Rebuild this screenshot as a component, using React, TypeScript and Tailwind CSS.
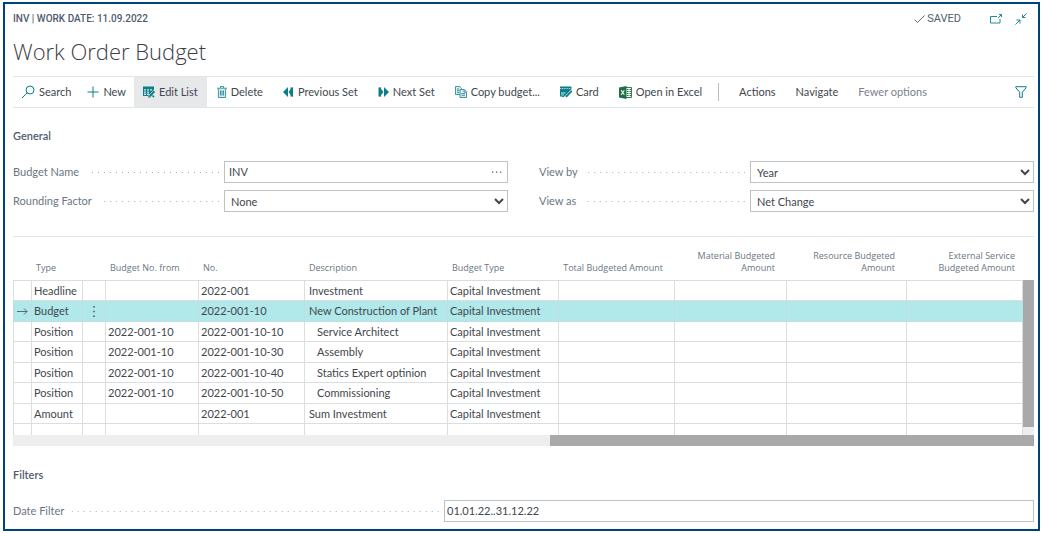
import React, { useState } from 'react';

const SearchIcon = () => (
  <svg className="size-[14px] text-[#0b7f88]" viewBox="0 0 14 14" fill="none" stroke="currentColor">
    <circle cx="9" cy="5" r="4" />
    <path d="M6.2 7.8 1 13" />
  </svg>
);

const PlusIcon = () => (
  <svg className="size-3 text-[#0b7f88]" viewBox="0 0 12 12" fill="none" stroke="currentColor">
    <path d="M6 0.5v11M0.5 6h11" />
  </svg>
);

const EditListIcon = () => (
  <svg className="size-3" viewBox="0 0 12 12">
    <path fill="#0b7f88" d="M0 0.5h11v5L6.5 10H0z" />
    <path fill="#d5e6e8" d="M1 3.2h2v1.4H1zM4 3.2h2v1.4H4zM7 3.2h2v1.4H7zM1 5.4h2v1.4H1zM4 5.4h2v1.4H4zM1 7.6h2V9H1zM4 7.6h2V9H4z" />
    <path stroke="#e6e8ea" strokeWidth="3.6" d="M12 5 6.5 11" />
    <path stroke="#0b7f88" strokeWidth="2" d="M11.4 5.2 6.8 10.2" />
    <path fill="#0b7f88" d="M5.6 9.4 7.6 11.2l-2.4.6zM9 10l1-1 1.5 1.5-1 1.2z" />
  </svg>
);

const TrashIcon = () => (
  <svg className="h-3 w-[10px] text-[#2b8d95]" viewBox="0 0 10 12" fill="none" stroke="currentColor">
    <path fill="#d9e8ea" stroke="none" d="M1.5 2.5h7v9h-7z" />
    <path d="M0 2.2h10M3.5 2v-1.5h3V2M1.4 2.5v9h7.2v-9M3.5 4.5v5M5 4.5v5M6.5 4.5v5" strokeWidth="0.9" />
  </svg>
);

const PreviousIcon = () => (
  <svg className="h-[10px] w-[11px]" viewBox="0 0 11 10" fill="#0b7f88">
    <path d="M5 0v10L0 5zM9.5 0v10L5.5 5z" />
    <path d="M7.5 0.5H10v9H7.5z" />
  </svg>
);

const NextIcon = () => (
  <svg className="h-[10px] w-[11px]" viewBox="0 0 11 10" fill="#0b7f88">
    <path d="M6 0v10l5-5zM1.5 0v10l4-5z" />
    <path d="M0.5 0.5H3v9H0.5z" />
  </svg>
);

const CopyIcon = () => (
  <svg className="size-3 text-[#2b8d95]" viewBox="0 0 12 12" fill="none" stroke="currentColor" strokeWidth="0.9">
    <path fill="#dcebed" d="M5 8.5H0.5v-8h4.2l1.8 1.8V3" />
    <path d="M2 3h2M2 4.7h2M2 6.4h2" />
    <path fill="#dcebed" d="M5 3.5h4.2l2.3 2.3v5.7H5z" />
    <path d="M9 3.7V6h2.3M6.5 7.5h3.5M6.5 9.3h3.5" />
  </svg>
);

const CardIcon = () => (
  <svg className="size-3" viewBox="0 0 12 12">
    <path fill="#0b7f88" d="M0 0.5h11.5v5L6.5 10.5H0z" />
    <path stroke="#fff" strokeWidth="0.7" d="M0 2.6h11.5" strokeDasharray="1.2 0.6" />
    <path fill="#cfe5e7" d="M1 6.6h4.6v0.9H1zM1 8.5h3v1H1z" />
    <path stroke="#fff" strokeWidth="3.4" d="M12.4 4.8 5.5 12" />
    <path stroke="#0b7f88" strokeWidth="1.8" d="M11.8 4.8 6 10.8" />
    <path stroke="#0b7f88" d="M1.5 9.5 3 11l2.5-3.5" fill="none" />
  </svg>
);

const ExcelIcon = () => (
  <svg className="size-[13px]" viewBox="0 0 13 13">
    <path fill="#fff" stroke="#1e7145" strokeWidth="0.9" d="M6 1.5h6.5v10H6z" />
    <path stroke="#1e7145" d="M8 3.5h1.5M10.5 3.5H12M8 5.5h1.5M10.5 5.5H12M8 7.5h1.5M10.5 7.5H12M8 9.5h1.5M10.5 9.5H12" strokeWidth="1.2" />
    <path fill="#1e7145" d="M0 1.4 7.5 0v13L0 11.6z" />
    <path stroke="#fff" strokeWidth="1.1" d="M2.2 4.2 5.3 8.8M5.3 4.2 2.2 8.8" />
  </svg>
);

const FilterIcon = () => (
  <svg className="size-3 text-[#0b7f88]" viewBox="0 0 12 12" fill="none" stroke="currentColor">
    <path d="M0.8 0.7h10.4v1L7.3 6.2v5.1H4.7V6.2L0.8 1.7z" />
  </svg>
);

const actions = [
  { label: 'Search', icon: SearchIcon, style: 'px-2' },
  { label: 'New', icon: PlusIcon, style: 'px-2' },
  { label: 'Edit List', icon: EditListIcon, style: 'px-[9px] bg-[#e6e8ea]' },
  { label: 'Delete', icon: TrashIcon, style: 'px-[10px]' },
  { label: 'Previous Set', icon: PreviousIcon, style: 'px-[10px]' },
  { label: 'Next Set', icon: NextIcon, style: 'px-[10px]' },
  { label: 'Copy budget...', icon: CopyIcon, style: 'px-[10px]' },
  { label: 'Card', icon: CardIcon, style: 'px-[10px]' },
  { label: 'Open in Excel', icon: ExcelIcon, style: 'px-[10px]' },
];

const rows = [
  { type: 'Headline', from: '', no: '2022-001', description: 'Investment', budgetType: 'Capital Investment' },
  { type: 'Budget', from: '', no: '2022-001-10', description: 'New Construction of Plant', budgetType: 'Capital Investment' },
  { type: 'Position', from: '2022-001-10', no: '2022-001-10-10', description: 'Service Architect', budgetType: 'Capital Investment' },
  { type: 'Position', from: '2022-001-10', no: '2022-001-10-30', description: 'Assembly', budgetType: 'Capital Investment' },
  { type: 'Position', from: '2022-001-10', no: '2022-001-10-40', description: 'Statics Expert optinion', budgetType: 'Capital Investment' },
  { type: 'Position', from: '2022-001-10', no: '2022-001-10-50', description: 'Commissioning', budgetType: 'Capital Investment' },
  { type: 'Amount', from: '', no: '2022-001', description: 'Sum Investment', budgetType: 'Capital Investment' },
];

function FieldLabel({ id, text, wide }: { id: string; text: string; wide?: boolean }) {
  return (
    <label
      htmlFor={id}
      className={`flex shrink-0 items-center gap-2 pr-[5px] text-[#6b7683] ${wide ? 'w-[431px]' : 'w-[211px]'}`}
    >
      {text}
      <span className="h-px flex-1 bg-[linear-gradient(to_right,transparent_5px,#a4a9ae_5px)] bg-[length:6px_1px] bg-right" />
    </label>
  );
}

function SelectField({ id, label, options }: { id: string; label: string; options: string[] }) {
  return (
    <div className="flex h-[22px] items-stretch">
      <FieldLabel id={id} text={label} />
      <select id={id} className="min-w-0 flex-1 border border-[#bfc2c5] bg-white pl-[2px] text-[#42474d]">
        {options.map((option) => (
          <option key={option}>{option}</option>
        ))}
      </select>
    </div>
  );
}

export default function App() {
  const [selected, setSelected] = useState(1);
  const [budgetName, setBudgetName] = useState('INV');
  const [dateFilter, setDateFilter] = useState('01.01.22..31.12.22');

  return (
    <div className="bg-white py-[2px] pl-[3px] pr-[2px] font-['Lato','Open_Sans',sans-serif] text-[11px] leading-4 text-[#42474d]">
      <main className="border-2 border-[#00437c] pb-[7px] pl-2 pr-1">
        {/* Header */}
        <header className="flex items-center justify-between pt-[7px]">
          <span className="font-['Roboto',sans-serif] text-[10px] font-medium text-[#505c6d]">INV | WORK DATE: 11.09.2022</span>
          <div className="flex items-center pr-[7px]">
            <span className="mr-[29px] flex items-center gap-[2px] font-['Roboto',sans-serif] text-[#505c6d]">
              <svg className="h-2 w-[11px]" viewBox="0 0 11 8" fill="none" stroke="currentColor" strokeWidth="0.9">
                <path d="M0.5 4.5 3.5 7.5 10.5 0.5" />
              </svg>
              SAVED
            </span>
            <button type="button" aria-label="Open in new window" className="mr-[13px]">
              <svg className="h-[10px] w-3 text-[#0b7f88]" viewBox="0 0 12 10" fill="none" stroke="currentColor" strokeWidth="0.9">
                <path d="M7 2.5H0.5v6.5h9.5V5M8 4l3-3M9 0.5h2.5V3" />
              </svg>
            </button>
            <button type="button" aria-label="Collapse">
              <svg className="size-3 text-[#0b7f88]" viewBox="0 0 12 12" fill="none" stroke="currentColor" strokeWidth="0.9">
                <path d="M11.5 0.5 7.5 4.5M7.5 1.5v3h3M0.5 11.5l4.5-4.5M1.5 7H5v3.5" />
              </svg>
            </button>
          </div>
        </header>
        <h1 className="mt-2 h-[41px] font-['Open_Sans',sans-serif] text-[22px] font-light leading-8 text-[#3c4045]">
          Work Order Budget
        </h1>

        {/* Action bar */}
        <nav className="flex h-8 items-center border-y border-[#e3e4e6]">
          {actions.map(({ label, icon: Icon, style }) => (
            <button key={label} type="button" className={`flex h-full items-center gap-1 whitespace-nowrap ${style}`}>
              <Icon />
              {label}
            </button>
          ))}
          <span className="ml-[6px] mr-[10px] h-[18px] w-px bg-[#b9bdc1]" />
          <button type="button" className="px-[10px]">Actions</button>
          <button type="button" className="px-[10px]">Navigate</button>
          <button type="button" className="whitespace-nowrap px-[10px] text-[#7a828c]">Fewer options</button>
          <button type="button" aria-label="Filter" className="ml-auto pr-[7px]">
            <FilterIcon />
          </button>
        </nav>

        {/* General */}
        <h2 className="mt-5 font-semibold text-[#505c6d]">General</h2>
        <section className="mt-[17px] grid grid-cols-2 gap-x-[31px] gap-y-[7px]">
          <div className="flex h-[22px] items-stretch">
            <FieldLabel id="budget-name" text="Budget Name" />
            <div className="flex min-w-0 flex-1 items-center border border-[#bfc2c5]">
              <input
                id="budget-name"
                value={budgetName}
                onChange={(e) => setBudgetName(e.target.value)}
                className="min-w-0 flex-1 pl-1 outline-none"
              />
              <button type="button" aria-label="Look up budget" className="pr-[5px]">
                <svg className="h-[2px] w-[10px]" viewBox="0 0 10 2" fill="#505c6d">
                  <path d="M0 0.5h1.3v1.3H0zM4 0.5h1.3v1.3H4zM8 0.5h1.3v1.3H8z" />
                </svg>
              </button>
            </div>
          </div>
          <SelectField id="view-by" label="View by" options={['Year', 'Month', 'Day']} />
          <SelectField id="rounding" label="Rounding Factor" options={['None', '1', '1000']} />
          <SelectField id="view-as" label="View as" options={['Net Change', 'Balance at Date']} />
        </section>

        {/* Budget lines */}
        <section className="mt-6 border-t border-[#e3e4e6]">
          <div className="flex">
            <table className="min-w-0 flex-1 table-fixed border-separate border-spacing-0">
              <colgroup>
                <col className="w-[19px]" />
                <col className="w-[51px]" />
                <col className="w-[23px]" />
                <col className="w-[93px]" />
                <col className="w-[106px]" />
                <col className="w-[143px]" />
                <col className="w-[111px]" />
                <col className="w-[116px]" />
                <col className="w-[112px]" />
                <col className="w-[120px]" />
                <col />
              </colgroup>
              <thead>
                <tr className="h-11 text-left align-bottom font-['Open_Sans',sans-serif] text-[9px] leading-3 text-[#6b7683] *:whitespace-nowrap *:border-b *:border-[#dcdddf] *:pb-[6px] *:font-normal">
                  <th />
                  <th className="pl-1">Type</th>
                  <th />
                  <th className="pl-1">Budget No. from</th>
                  <th className="pl-1">No.</th>
                  <th className="pl-1">Description</th>
                  <th className="pl-1">Budget Type</th>
                  <th className="pr-3 text-right">Total Budgeted Amount</th>
                  <th className="pr-3 text-right">Material Budgeted<br />Amount</th>
                  <th className="pr-3 text-right">Resource Budgeted<br />Amount</th>
                  <th className="pr-2 text-right">External Service<br />Budgeted Amount</th>
                </tr>
              </thead>
              <tbody>
                {rows.map((row, index) => (
                  <tr
                    key={index}
                    onClick={() => setSelected(index)}
                    className={`odd:h-5 even:h-[21px] *:whitespace-nowrap *:border-b *:border-r ${
                      index === selected ? 'bg-[#b1e8ea] *:border-[#bddfe2]' : '*:border-[#dcdddf]'
                    }`}
                  >
                    <td className="border-l">
                      {index === selected && (
                        <svg className="ml-[3px] h-[7px] w-[11px]" viewBox="0 0 11 7" fill="none" stroke="#505c6d" strokeWidth="0.9">
                          <path d="M0 3.5h10M7 0.5l3 3-3 3" />
                        </svg>
                      )}
                    </td>
                    <td className="pl-[2px]">{row.type}</td>
                    <td>
                      {index === selected && (
                        <svg className="mx-auto h-[11px] w-[2px]" viewBox="0 0 2 11" fill="#42474d">
                          <path d="M0.3 0h1.4v1.4H0.3zM0.3 4.8h1.4v1.4H0.3zM0.3 9.6h1.4V11H0.3z" />
                        </svg>
                      )}
                    </td>
                    <td className="pl-[2px]">{row.from}</td>
                    <td className="pl-[2px]">{row.no}</td>
                    <td className={row.type === 'Position' ? 'pl-3' : 'pl-1'}>{row.description}</td>
                    <td className="pl-[2px]">{row.budgetType}</td>
                    <td />
                    <td />
                    <td />
                    <td className="border-r-0" />
                  </tr>
                ))}
                <tr className="h-[11px] *:border-r *:border-[#dcdddf]">
                  <td className="border-l" />
                  <td />
                  <td />
                  <td />
                  <td />
                  <td />
                  <td />
                  <td />
                  <td />
                  <td />
                  <td className="border-r-0" />
                </tr>
              </tbody>
            </table>
            <div className="flex w-[11px] flex-col pt-[43px]">
              <div className="flex-1 bg-[#a9a9a9]" />
              <div className="h-2 bg-[#eeeeee]" />
            </div>
          </div>
          <div className="flex h-[11px] justify-end bg-[#eeeeee]">
            <div className="w-[484px] bg-[#a9a9a9]" />
          </div>
        </section>

        {/* Filters */}
        <h2 className="mt-[21px] font-semibold text-[#505c6d]">Filters</h2>
        <div className="mt-[17px] flex h-[22px] items-stretch">
          <FieldLabel id="date-filter" text="Date Filter" wide />
          <input
            id="date-filter"
            value={dateFilter}
            onChange={(e) => setDateFilter(e.target.value)}
            className="min-w-0 flex-1 border border-[#bfc2c5] pl-[2px] outline-none"
          />
        </div>
      </main>
    </div>
  );
}
